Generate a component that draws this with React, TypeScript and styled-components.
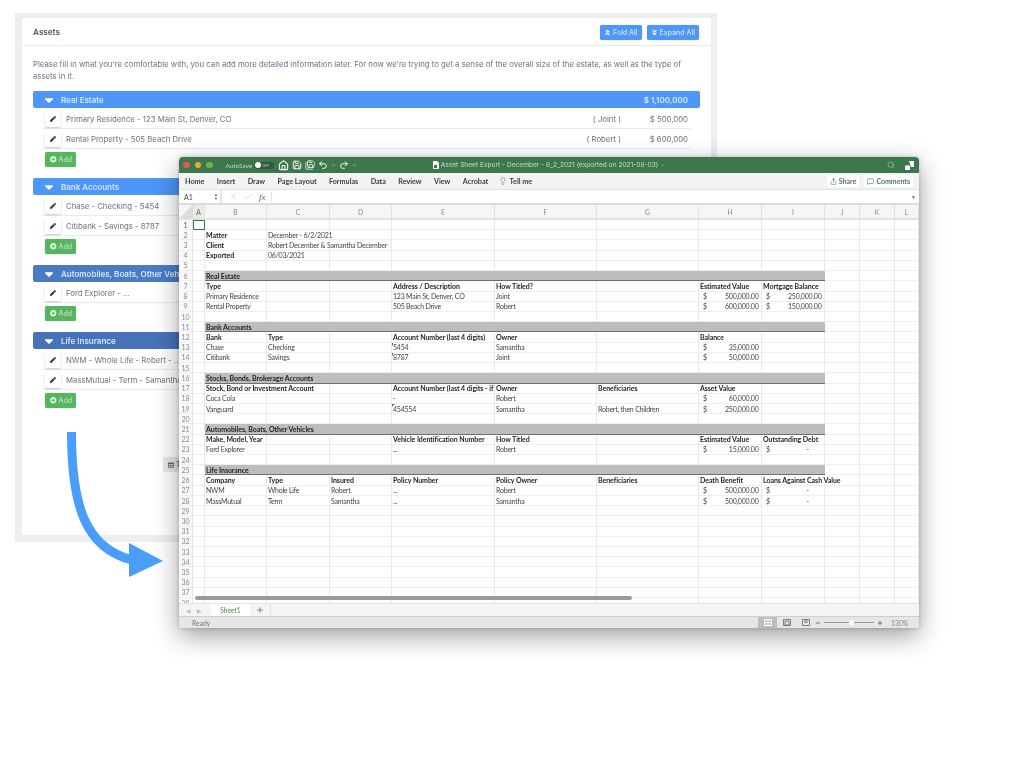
import React from "react";
import styled, { createGlobalStyle } from "styled-components";
import {
  FaAngleDoubleDown,
  FaAngleDoubleUp,
  FaCaretDown,
  FaPen,
  FaPlusCircle,
  FaTable,
} from "react-icons/fa";
import {
  Check,
  ChevronDown,
  Home,
  Lightbulb,
  MessageSquare,
  Minus,
  Plus,
  Redo2,
  Save,
  SaveAll,
  Search,
  Share,
  Undo2,
  X,
} from "lucide-react";

const GlobalStyle = createGlobalStyle`
  html, body {
    margin: 0;
    padding: 0;
    background: #fff;
  }
`;

const UI_FONT = `Inter, "Open Sans", sans-serif`;
const SHEET_FONT = `Lato, "Open Sans", sans-serif`;

const sections = [
  {
    title: "Real Estate",
    color: "#4e96f8",
    total: "$ 1,100,000",
    rows: [
      { label: "Primary Residence - 123 Main St, Denver, CO", owner: "( Joint )", value: "$ 500,000" },
      { label: "Rental Property - 505 Beach Drive", owner: "( Robert )", value: "$ 600,000" },
    ],
  },
  {
    title: "Bank Accounts",
    color: "#4e96f8",
    total: "",
    rows: [
      { label: "Chase - Checking - 5454", owner: "", value: "" },
      { label: "Citibank - Savings - 8787", owner: "", value: "" },
    ],
  },
  {
    title: "Automobiles, Boats, Other Vehicles",
    color: "#4a7cc6",
    total: "",
    rows: [{ label: "Ford Explorer - ...", owner: "", value: "" }],
  },
  {
    title: "Life Insurance",
    color: "#4872b8",
    total: "",
    rows: [
      { label: "NWM - Whole Life - Robert - ...", owner: "", value: "" },
      { label: "MassMutual - Term - Samantha - ...", owner: "", value: "" },
    ],
  },
];

type CellRow =
  | { kind: "blank" }
  | { kind: "section"; title: string }
  | { kind: "head" | "plain" | "meta"; cells: (string | null)[]; flagged?: boolean };

const blank: CellRow = { kind: "blank" };
const NO_DEBT = "$|-\u00a0\u00a0\u00a0\u00a0\u00a0\u00a0\u00a0\u00a0";

const sheetRows: CellRow[] = [
  blank,
  { kind: "meta", cells: ["Matter", "December - 6/2/2021"] },
  { kind: "meta", cells: ["Client", "Robert December & Samantha December"] },
  { kind: "meta", cells: ["Exported", "06/03/2021"] },
  blank,
  { kind: "section", title: "Real Estate" },
  { kind: "head", cells: ["Type", "", "", "Address / Description", "How Titled?", "", "Estimated Value", "Mortgage Balance"] },
  { kind: "plain", cells: ["Primary Residence", "", "", "123 Main St, Denver, CO", "Joint", "", "$|500,000.00", "$|250,000.00"] },
  { kind: "plain", cells: ["Rental Property", "", "", "505 Beach Drive", "Robert", "", "$|600,000.00", "$|150,000.00"] },
  blank,
  { kind: "section", title: "Bank Accounts" },
  { kind: "head", cells: ["Bank", "Type", "", "Account Number (last 4 digits)", "Owner", "", "Balance", ""] },
  { kind: "plain", flagged: true, cells: ["Chase", "Checking", "", "5454", "Samantha", "", "$|35,000.00", ""] },
  { kind: "plain", flagged: true, cells: ["Citibank", "Savings", "", "8787", "Joint", "", "$|50,000.00", ""] },
  blank,
  { kind: "section", title: "Stocks, Bonds, Brokerage Accounts" },
  { kind: "head", cells: ["Stock, Bond or Investment Account", "", "", "Account Number (last 4 digits - if any)", "Owner", "Beneficiaries", "Asset Value", ""] },
  { kind: "plain", cells: ["Coca Cola", "", "", "-", "Robert", "", "$|60,000.00", ""] },
  { kind: "plain", flagged: true, cells: ["Vanguard", "", "", "454554", "Samantha", "Robert, then Children", "$|250,000.00", ""] },
  blank,
  { kind: "section", title: "Automobiles, Boats, Other Vehicles" },
  { kind: "head", cells: ["Make, Model, Year", "", "", "Vehicle Identification Number", "How Titled", "", "Estimated Value", "Outstanding Debt"] },
  { kind: "plain", cells: ["Ford Explorer", "", "", "...", "Robert", "", "$|15,000.00", NO_DEBT] },
  blank,
  { kind: "section", title: "Life Insurance" },
  { kind: "head", cells: ["Company", "Type", "Insured", "Policy Number", "Policy Owner", "Beneficiaries", "Death Benefit", "Loans Against Cash Value"] },
  { kind: "plain", cells: ["NWM", "Whole Life", "Robert", "...", "Robert", "", "$|500,000.00", NO_DEBT] },
  { kind: "plain", cells: ["MassMutual", "Term", "Samantha", "...", "Samantha", "", "$|500,000.00", NO_DEBT] },
  ...Array.from({ length: 10 }, () => blank),
];

const columns = ["A", "B", "C", "D", "E", "F", "G", "H", "I", "J", "K", "L"];
const COLUMN_TEMPLATE = "14px 12px 62px 63px 62px 103px 102px 102px 63px 63px 35px 35px 24px";

const Page = styled.div`
  position: relative;
  width: 1024px;
  height: 768px;
  overflow: hidden;
  padding: 13px 0 0 15px;
  box-sizing: border-box;
  background: #fff;
  filter: blur(0.5px);
`;

const Panel = styled.div`
  width: 702px;
  height: 529px;
  box-sizing: border-box;
  padding: 5px 6px 7px 7px;
  background: #eceef1;
`;

const Card = styled.section`
  height: 100%;
  background: #fff;
  border-radius: 2px;
  font-family: ${UI_FONT};
  color: #6b7280;
`;

const CardHeader = styled.header`
  height: 28px;
  box-sizing: border-box;
  padding: 0 11px;
  display: flex;
  align-items: center;
  justify-content: space-between;
  border-bottom: 1px solid #e9ebee;
`;

const CardTitle = styled.h2`
  margin: 0;
  font-size: 8px;
  font-weight: 700;
  color: #5d6778;
`;

const HeaderActions = styled.div`
  display: flex;
  gap: 5px;
  margin: 1px 1px 0 0;
`;

const BlueButton = styled.button`
  height: 15px;
  padding: 0 4px;
  display: flex;
  align-items: center;
  gap: 2px;
  border: 0;
  border-radius: 2px;
  background: #4e96f8;
  color: #cfe2fb;
  font: 500 7px ${UI_FONT};
  box-shadow: 0 0 1px rgba(30, 70, 140, 0.5);
`;

const CardBody = styled.div`
  padding: 12px 11px 0;
`;

const Intro = styled.p`
  margin: 0 0 9px;
  font-size: 7.78px;
  line-height: 12px;
  color: #6b7280;
`;

const Group = styled.div`
  margin-bottom: 11px;
`;

const GroupBar = styled.div<{ $color: string }>`
  height: 17px;
  padding: 0 12px 0 9px;
  display: flex;
  align-items: center;
  border-radius: 2px;
  background: ${(p) => p.$color};
  color: #d6e5fb;
  font-size: 8px;
  font-weight: 600;
`;

const GroupCaret = styled(FaCaretDown)`
  width: 14px;
  height: 14px;
  margin-right: 5px;
  color: #fff;
`;

const GroupTitle = styled.span`
  flex: 1;
`;

const GroupRows = styled.div`
  margin: 1px 9px 0;
`;

const AssetRow = styled.div`
  height: 20px;
  box-sizing: border-box;
  padding: 0 3px;
  display: flex;
  align-items: center;
  border-bottom: 1px solid #e9ebee;
  font-size: 7.78px;
`;

const EditButton = styled.span`
  width: 16px;
  height: 16px;
  margin-right: 5px;
  display: flex;
  align-items: center;
  justify-content: center;
  background: #fff;
  border-radius: 2px;
  box-shadow: 0 1px 2px rgba(0, 0, 0, 0.22);
  color: #333b49;
  font-size: 6px;
`;

const AssetLabel = styled.span`
  flex: 1;
`;

const AssetOwner = styled.span`
  width: 60px;
  text-align: right;
`;

const AssetValue = styled.span`
  width: 67px;
  text-align: right;
`;

const AddButton = styled.button`
  width: 31px;
  height: 15px;
  margin: 3px 0 0 12px;
  padding: 0 0 0 5px;
  display: flex;
  align-items: center;
  gap: 2px;
  border: 0;
  border-radius: 2px;
  background: #57b560;
  color: #b8e2bc;
  font: 500 7px ${UI_FONT};
  box-shadow: 0 0 1px rgba(20, 90, 30, 0.6);
`;

const AddIcon = styled(FaPlusCircle)`
  width: 6.5px;
  height: 6.5px;
  color: #eef8ef;
`;

const FooterActions = styled.div`
  display: flex;
  margin: 49px 0 0 130px;
`;

const GhostButton = styled.button`
  width: 60px;
  height: 15px;
  padding: 0 0 0 5px;
  display: flex;
  align-items: center;
  gap: 2px;
  border: 0;
  border-radius: 2px;
  background: #e6e8ec;
  color: #5d6778;
  font: 500 7px ${UI_FONT};
`;

/* the spreadsheet window sits over the web page, like a desktop window */
const ExcelWindow = styled.div`
  position: absolute;
  left: 179px;
  top: 157px;
  width: 740px;
  height: 471px;
  display: flex;
  flex-direction: column;
  overflow: hidden;
  border-radius: 4px 4px 2px 2px;
  background: #fff;
  box-shadow: 0 8px 26px rgba(0, 0, 0, 0.38), 0 0 4px rgba(0, 0, 0, 0.2);
  font-family: ${SHEET_FONT};
`;

const TitleBar = styled.div`
  height: 16px;
  flex: none;
  display: grid;
  grid-template-columns: 1fr auto 1fr;
  align-items: center;
  background: #3d784c;
  color: #c9dccf;
  font-size: 7.2px;
`;

const TitleLeft = styled.div`
  display: flex;
  align-items: center;
  padding-left: 4px;
`;

const TrafficLight = styled.span<{ $color: string }>`
  width: 6.5px;
  height: 6.5px;
  margin-right: 5px;
  border-radius: 50%;
  background: ${(p) => p.$color};
`;

const AutoSave = styled.span`
  margin-left: 8px;
  font-size: 6.4px;
  color: #c4d8c9;
`;

const Toggle = styled.span`
  width: 20px;
  height: 7px;
  margin: 0 4px 0 2px;
  padding-left: 1px;
  box-sizing: border-box;
  display: flex;
  align-items: center;
  gap: 1px;
  border-radius: 4px;
  background: #2c5c39;
  color: #b7cdbd;
  font-size: 3.6px;
`;

const ToggleKnob = styled.span`
  width: 6px;
  height: 6px;
  border-radius: 50%;
  background: #fff;
`;

const TitleTools = styled.div`
  display: flex;
  align-items: center;
  gap: 3px;
  color: #fff;
`;

const TitleCenter = styled.div`
  display: flex;
  align-items: center;
  gap: 2px;
  white-space: nowrap;
  font-family: ${UI_FONT};
  font-size: 6.6px;
`;

const FileGlyph = styled.svg`
  width: 6px;
  height: 8px;
  color: #fff;
`;

const TitleRight = styled.div`
  display: flex;
  align-items: center;
  justify-content: flex-end;
  gap: 9px;
  padding-right: 4px;
  color: #a9c4b0;
`;

const UserGlyph = styled.svg`
  width: 11px;
  height: 11px;
  color: #fff;
`;

const Ribbon = styled.div`
  height: 17px;
  flex: none;
  box-sizing: border-box;
  padding: 0 6px;
  display: flex;
  align-items: center;
  gap: 12.4px;
  background: #f3f3f3;
  border-bottom: 1px solid #e2e2e2;
  color: #3d3d3d;
  font-size: 7.2px;
  font-weight: 700;
`;

const TellMe = styled.span`
  display: flex;
  align-items: center;
  gap: 3px;
  margin-left: -2px;
`;

const RibbonSpacer = styled.span`
  flex: 1;
`;

const RibbonButton = styled.span`
  display: flex;
  align-items: center;
  gap: 2px;
  height: 12px;
  padding: 0 3px;
  margin-left: -7.4px;
  background: #fff;
  border-radius: 1px;
  color: #4f7a5b;
  font-size: 7px;
`;

const FormulaBar = styled.div`
  height: 15px;
  flex: none;
  box-sizing: border-box;
  display: flex;
  align-items: center;
  background: #fff;
  border-bottom: 2px solid #dcdcdc;
  color: #bbb;
`;

const NameBox = styled.div`
  width: 43px;
  height: 100%;
  box-sizing: border-box;
  padding: 0 2px 0 5px;
  display: flex;
  align-items: center;
  justify-content: space-between;
  border-right: 2px solid #e4e4e4;
  color: #444;
  font-size: 7px;
`;

const Stepper = styled.span`
  display: flex;
  flex-direction: column;
  font-size: 4px;
  line-height: 4px;
  color: #555;
`;

const FormulaIcons = styled.div`
  width: 50px;
  height: 9px;
  box-sizing: border-box;
  padding: 0 4px 0 7px;
  display: flex;
  align-items: center;
  gap: 6px;
  border-right: 1px solid #e4e4e4;
`;

const Fx = styled.span`
  font: italic 9px "Liberation Serif", serif;
  color: #666;
`;

const FormulaArrow = styled.span`
  margin-left: auto;
  padding-right: 3px;
  font-size: 5px;
  color: #666;
`;

const SheetArea = styled.div`
  position: relative;
  flex: 1;
  min-height: 0;
  overflow: hidden;
  font-size: 7px;
  color: #3a3a3a;
`;

const ColumnHead = styled.div`
  height: 15px;
  display: grid;
  grid-template-columns: ${COLUMN_TEMPLATE};
  background: #f6f6f6;
  border-bottom: 2px solid #e2e2e2;
  box-sizing: border-box;
`;

const Corner = styled.div`
  background: linear-gradient(135deg, #f6f6f6 50%, #dcdcdc 50%);
`;

const ColumnLabel = styled.div<{ $active?: boolean }>`
  display: flex;
  align-items: center;
  justify-content: center;
  border-right: 1px solid #e2e2e2;
  font-size: 6.8px;
  color: ${(p) => (p.$active ? "#2f7a45" : "#8a8a8a")};
  background: ${(p) => (p.$active ? "#e9e9e9" : "transparent")};
`;

const SheetRow = styled.div`
  height: 10.23px;
  display: grid;
  grid-template-columns: ${COLUMN_TEMPLATE};
`;

const RowNumber = styled.div<{ $active?: boolean }>`
  display: flex;
  align-items: center;
  justify-content: center;
  background: #f9f9f9;
  border-right: 1px solid #e4e4e4;
  border-bottom: 1px solid #efefef;
  font-size: 7px;
  color: ${(p) => (p.$active ? "#2f7a45" : "#8a8a8a")};
`;

const Cell = styled.div<{ $bold?: boolean; $flag?: boolean; $clip?: boolean; $selected?: boolean }>`
  position: relative;
  min-width: 0;
  box-sizing: border-box;
  padding: 0 1px;
  display: flex;
  align-items: center;
  white-space: nowrap;
  overflow: ${(p) => (p.$clip ? "hidden" : "visible")};
  border-right: 1px solid #e8e8e8;
  border-bottom: 1px solid #efefef;
  font-size: ${(p) => (p.$bold ? "7px" : "7px")};
  letter-spacing: ${(p) => (p.$bold ? "-0.05px" : "-0.22px")};
  font-weight: ${(p) => (p.$bold ? 700 : 400)};
  color: ${(p) => (p.$bold ? "#1e1e1e" : "#444")};
  outline: ${(p) => (p.$selected ? "1.5px solid #2f7a45" : "none")};
  outline-offset: -1px;

  ${(p) =>
    p.$flag &&
    `
    &::before {
      content: "";
      position: absolute;
      left: 0;
      top: 0;
      border-top: 3.5px solid #2f8a3f;
      border-right: 3.5px solid transparent;
    }
  `}
`;

/* text that runs past its cell hides the grid line under it, as in a real sheet */
const CellText = styled.span`
  position: relative;
  z-index: 1;
  background: #fff;
`;

const SectionBand = styled.div`
  grid-column: span 8;
  box-sizing: border-box;
  padding-left: 1px;
  display: flex;
  align-items: center;
  background: #bdbdbd;
  border-bottom: 1.5px solid #6f6f6f;
  font-size: 7px;
  letter-spacing: -0.05px;
  font-weight: 700;
  color: #1e1e1e;
`;

const Money = styled.span`
  width: 100%;
  padding: 0 1.5px 0 3px;
  display: flex;
  justify-content: space-between;
`;

const ScrollThumb = styled.div`
  position: absolute;
  left: 16px;
  bottom: 3px;
  width: 437px;
  height: 4px;
  border-radius: 2px;
  background: #9a9a9a;
`;

const TabStrip = styled.div`
  height: 13px;
  flex: none;
  display: flex;
  align-items: center;
  background: #f4f4f4;
  border-top: 1px solid #e2e2e2;
  box-sizing: border-box;
  color: #bdbdbd;
`;

const TabArrows = styled.span`
  width: 32px;
  padding-left: 7px;
  box-sizing: border-box;
  display: flex;
  gap: 6px;
  font-size: 6px;
`;

const SheetTab = styled.span`
  width: 39px;
  height: 100%;
  display: flex;
  align-items: center;
  justify-content: center;
  background: #fff;
  color: #3f8a55;
  font-size: 6.6px;
`;

const AddSheet = styled.span`
  width: 20px;
  height: 100%;
  display: flex;
  align-items: center;
  justify-content: center;
  border-right: 1px solid #e2e2e2;
  color: #555;
`;

const StatusBar = styled.div`
  height: 12px;
  flex: none;
  box-sizing: border-box;
  padding-left: 13px;
  display: flex;
  align-items: center;
  background: #e6e6e6;
  border-top: 1px solid #cfcfcf;
  color: #777;
  font-size: 6.8px;
`;

const StatusRight = styled.div`
  margin-left: auto;
  height: 100%;
  display: flex;
  align-items: center;
`;

const ViewButton = styled.span<{ $active?: boolean }>`
  width: 19px;
  height: 100%;
  display: flex;
  align-items: center;
  justify-content: center;
  background: ${(p) => (p.$active ? "#bdbdbd" : "transparent")};
`;

const ViewGlyph = styled.svg`
  width: 8px;
  height: 7px;
  color: #555;
`;

const ZoomTrack = styled.span`
  position: relative;
  width: 50px;
  height: 1.5px;
  margin: 0 3px;
  background: #999;
`;

const ZoomThumb = styled.span`
  position: absolute;
  left: 25px;
  top: -2px;
  width: 5px;
  height: 5px;
  border-radius: 50%;
  background: #fff;
`;

const ZoomLabel = styled.span`
  width: 28px;
  margin-left: 8px;
  color: #888;
`;

const ArrowGraphic = styled.svg`
  position: absolute;
  left: 60px;
  top: 430px;
  width: 110px;
  height: 150px;
`;

const formulaIconProps = { size: 9, strokeWidth: 1.4 };

const App: React.FC = () => {
  return (
    <Page>
      <GlobalStyle />
      <Panel>
        <Card>
          <CardHeader>
            <CardTitle>Assets</CardTitle>
            <HeaderActions>
              <BlueButton>
                <FaAngleDoubleUp size={7} color="#fff" />
                Fold All
              </BlueButton>
              <BlueButton>
                <FaAngleDoubleDown size={7} color="#fff" />
                Expand All
              </BlueButton>
            </HeaderActions>
          </CardHeader>
          <CardBody>
            <Intro>
              Please fill in what you're comfortable with, you can add more detailed information later. For now we're
              trying to get a sense of the overall size of the estate, as well as the type of assets in it.
            </Intro>
            {sections.map((section) => (
              <Group key={section.title}>
                <GroupBar $color={section.color}>
                  <GroupCaret />
                  <GroupTitle>{section.title}</GroupTitle>
                  <span>{section.total}</span>
                </GroupBar>
                <GroupRows>
                  {section.rows.map((row) => (
                    <AssetRow key={row.label}>
                      <EditButton>
                        <FaPen />
                      </EditButton>
                      <AssetLabel>{row.label}</AssetLabel>
                      <AssetOwner>{row.owner}</AssetOwner>
                      <AssetValue>{row.value}</AssetValue>
                    </AssetRow>
                  ))}
                </GroupRows>
                <AddButton>
                  <AddIcon />
                  Add
                </AddButton>
              </Group>
            ))}
            <FooterActions>
              <GhostButton>
                <FaTable size={6} />
                Table
              </GhostButton>
            </FooterActions>
          </CardBody>
        </Card>
      </Panel>

      <ExcelWindow>
        <TitleBar>
          <TitleLeft>
            <TrafficLight $color="#e8584f" />
            <TrafficLight $color="#e5ac33" />
            <TrafficLight $color="#5fb94f" />
            <AutoSave>AutoSave</AutoSave>
            <Toggle>
              <ToggleKnob />
              OFF
            </Toggle>
            <TitleTools>
              <Home size={11} strokeWidth={2.4} />
              <Save size={10} strokeWidth={2.2} />
              <SaveAll size={10} strokeWidth={1.8} />
              <Undo2 size={10} strokeWidth={2.2} />
              <ChevronDown size={5} />
              <Redo2 size={10} strokeWidth={2.2} />
              <ChevronDown size={5} />
            </TitleTools>
          </TitleLeft>
          <TitleCenter>
            <FileGlyph viewBox="0 0 6 8">
              <path d="M0 0h4l2 2v6H0z" fill="currentColor" />
              <path d="M1 4h3v3H1z" fill="#3d784c" />
            </FileGlyph>
            Asset Sheet Export - December - 6_2_2021 (exported on 2021-06-03)
            <ChevronDown size={5} />
          </TitleCenter>
          <TitleRight>
            <Search size={8} />
            <UserGlyph viewBox="0 0 11 11">
              <path d="M5 1h5v6H7zM1 6c1-1 4-1 5 0v4H1z" fill="currentColor" />
            </UserGlyph>
          </TitleRight>
        </TitleBar>

        <Ribbon>
          <span>Home</span>
          <span>Insert</span>
          <span>Draw</span>
          <span>Page Layout</span>
          <span>Formulas</span>
          <span>Data</span>
          <span>Review</span>
          <span>View</span>
          <span>Acrobat</span>
          <TellMe>
            <Lightbulb size={8} strokeWidth={1.2} />
            Tell me
          </TellMe>
          <RibbonSpacer />
          <RibbonButton>
            <Share size={7} />
            Share
          </RibbonButton>
          <RibbonButton>
            <MessageSquare size={7} />
            Comments
          </RibbonButton>
        </Ribbon>

        <FormulaBar>
          <NameBox>
            A1
            <Stepper>
              <span>▲</span>
              <span>▼</span>
            </Stepper>
          </NameBox>
          <FormulaIcons>
            <X {...formulaIconProps} />
            <Check {...formulaIconProps} />
            <Fx>fx</Fx>
          </FormulaIcons>
          <FormulaArrow>▼</FormulaArrow>
        </FormulaBar>

        <SheetArea>
          <ColumnHead>
            <Corner />
            {columns.map((c, i) => (
              <ColumnLabel key={c} $active={i === 0}>
                {c}
              </ColumnLabel>
            ))}
          </ColumnHead>
          {sheetRows.map((row, index) => (
            <SheetRow key={index}>
              <RowNumber $active={index === 0}>{index + 1}</RowNumber>
              <Cell $selected={index === 0} />
              {row.kind === "section" ? (
                <SectionBand>{row.title}</SectionBand>
              ) : (
                Array.from({ length: 8 }, (_, i) => {
                  const text = row.kind === "blank" ? "" : row.cells[i] ?? "";
                  const isMoney = !!text && text.includes("|");
                  const [sign, amount] = isMoney ? text.split("|") : ["", ""];
                  const bold = row.kind === "head" || (row.kind === "meta" && i === 0);
                  const flag = row.kind === "plain" && row.flagged && i === 3;
                  return (
                    <Cell key={i} $bold={bold} $flag={flag} $clip={i === 3 && text.includes("if any")}>
                      {isMoney ? (
                        <Money>
                          <span>{sign}</span>
                          <span>{amount}</span>
                        </Money>
                      ) : (
                        text && <CellText>{text}</CellText>
                      )}
                    </Cell>
                  );
                })
              )}
              <Cell />
              <Cell />
              <Cell />
            </SheetRow>
          ))}
          <ScrollThumb />
        </SheetArea>

        <TabStrip>
          <TabArrows>
            <span>◀</span>
            <span>▶</span>
          </TabArrows>
          <SheetTab>Sheet1</SheetTab>
          <AddSheet>
            <Plus size={8} strokeWidth={2} />
          </AddSheet>
        </TabStrip>

        <StatusBar>
          Ready
          <StatusRight>
            <ViewButton $active>
              <ViewGlyph viewBox="0 0 8 7">
                <path d="M0 .5h8M0 3.5h8M0 6.5h8M.5 0v7M4 0v7M7.5 0v7" stroke="#fff" fill="none" />
              </ViewGlyph>
            </ViewButton>
            <ViewButton>
              <ViewGlyph viewBox="0 0 8 7">
                <path d="M.5.5h7v6h-7zM2 2h4v4H2z" stroke="currentColor" fill="none" strokeWidth=".7" />
              </ViewGlyph>
            </ViewButton>
            <ViewButton>
              <ViewGlyph viewBox="0 0 8 7">
                <path d="M.5.5h7v6h-7zM3 .5v3h2v-3" stroke="currentColor" fill="none" strokeWidth=".7" />
              </ViewGlyph>
            </ViewButton>
            <Minus size={6} color="#555" strokeWidth={3} />
            <ZoomTrack>
              <ZoomThumb />
            </ZoomTrack>
            <Plus size={6} color="#555" strokeWidth={3} />
            <ZoomLabel>130%</ZoomLabel>
          </StatusRight>
        </StatusBar>
      </ExcelWindow>

      <ArrowGraphic viewBox="0 0 110 150">
        <path d="M11.5 2 C 11.5 75, 25 118, 72 130" fill="none" stroke="#4a9df8" strokeWidth="9" />
        <path d="M69 113 L103 131 L69 147 Z" fill="#4a9df8" />
      </ArrowGraphic>
    </Page>
  );
};

export default App;
